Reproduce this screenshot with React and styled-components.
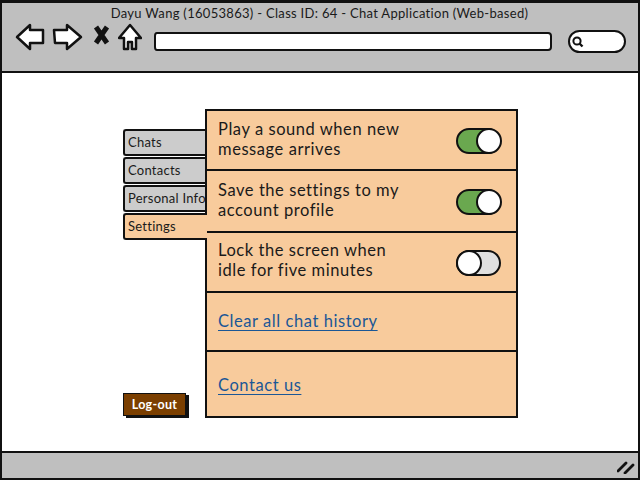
import React from "react";
import styled, { createGlobalStyle } from "styled-components";

const GlobalStyle = createGlobalStyle`
    html, body {
        margin : 0;
        padding : 0;
        background : #ffffff;
    }
    body {
        font-family : "Lato", "Noto Sans", sans-serif;
        color : #1a1a1a;
    }
`;

const Window = styled.div`
    width : 640px;
    height : 480px;
    box-sizing : border-box;
    border : 2px solid #111111;
    border-top-width : 3px;
    display : flex;
    flex-direction : column;
    overflow : hidden;
`;

const Header = styled.header`
    height : 70px;
    flex : none;
    box-sizing : border-box;
    background : #bfbfbf;
    border-bottom : 2px solid #111111;
    padding : 2px 12px 0 13px;
`;

const Title = styled.div`
    text-align : center;
    font-size : 13px;
    line-height : 17px;
    letter-spacing : 0.3px;
    padding-right : 2px;
`;

const Toolbar = styled.div`
    display : flex;
    align-items : flex-start;
    margin-top : 1px;
    height : 32px;
`;

const NavIcon = styled.svg`
    flex : none;
    display : block;
    margin-right : ${props => props.$gap}px;
`;

const AddressBar = styled.div`
    flex : none;
    width : 394px;
    height : 15px;
    margin-left : 12px;
    margin-top : 9px;
    background : #ffffff;
    border : 2px solid #111111;
    border-radius : 3px 4px 4px 3px / 4px;
`;

const SearchBox = styled.div`
    flex : none;
    width : 54px;
    height : 19px;
    margin-left : 16px;
    margin-top : 7px;
    background : #ffffff;
    border : 2px solid #111111;
    border-radius : 12px;
    display : flex;
    align-items : center;
`;

const Content = styled.main`
    flex : 1;
    display : flex;
    align-items : stretch;
    padding : 36px 0 33px 121px;
    min-height : 0;
`;

const Sidebar = styled.nav`
    width : 82px;
    flex : none;
    display : flex;
    flex-direction : column;
    padding-top : 20px;
    position : relative;
    z-index : 1;
`;

const Tab = styled.div`
    height : 27px;
    flex : none;
    box-sizing : border-box;
    margin-bottom : 1px;
    margin-right : ${props => (props.$active ? "-2px" : "0")};
    padding-left : 3px;
    font-size : 13px;
    line-height : 22px;
    letter-spacing : 0.25px;
    white-space : nowrap;
    overflow : hidden;
    background : ${props => (props.$active ? "#f8cb9c" : "#cccccc")};
    border : 2px solid #111111;
    border-right : none;
    border-radius : 3px 0 0 3px;
`;

const LogoutButton = styled.div`
    margin-top : auto;
    margin-bottom : 2px;
    width : 63px;
    height : 23px;
    box-sizing : border-box;
    background : #7b3f00;
    color : #ffffff;
    border : 1px solid #111111;
    box-shadow : 3px 2px 0 #111111;
    font-size : 12.5px;
    font-weight : 700;
    line-height : 21px;
    text-align : center;
    letter-spacing : 0.3px;
`;

const Panel = styled.section`
    width : 313px;
    flex : none;
    box-sizing : border-box;
    display : flex;
    flex-direction : column;
    background : #f8cb9c;
    border : 2px solid #111111;
`;

const Row = styled.div`
    height : ${props => props.$height}px;
    flex : none;
    box-sizing : border-box;
    display : flex;
    align-items : center;
    justify-content : space-between;
    padding : 0 15px 0 11px;
    border-bottom : ${props => (props.$last ? "none" : "2px solid #111111")};
`;

const RowText = styled.div`
    font-size : 16.5px;
    line-height : 20px;
    letter-spacing : 0.56px;
    white-space : pre-line;
    margin-bottom : ${props => props.$lift}px;
`;

const RowLink = styled.a`
    font-size : 16.5px;
    letter-spacing : 0.56px;
    color : #1b5796;
    text-decoration : underline;
    text-underline-offset : 3px;
    margin-bottom : ${props => props.$lift}px;
`;

const Switch = styled.div`
    width : 45px;
    height : 26px;
    flex : none;
    box-sizing : border-box;
    position : relative;
    margin-top : 2px;
    background : ${props => (props.$on ? "#6aa84f" : "#e0e0e0")};
    border : 2.5px solid #111111;
    border-radius : 13px;
`;

const Knob = styled.div`
    position : absolute;
    top : -2.5px;
    ${props => (props.$on ? "right : -2.5px;" : "left : -2.5px;")}
    width : 26px;
    height : 26px;
    box-sizing : border-box;
    background : #ffffff;
    border : 2.5px solid #111111;
    border-radius : 50%;
`;

const Footer = styled.footer`
    height : 27px;
    flex : none;
    box-sizing : border-box;
    background : #bfbfbf;
    border-top : 2px solid #111111;
    display : flex;
    align-items : center;
    justify-content : flex-end;
    padding : 2px 3px 0 0;
`;

const stroke = { stroke: "#111111", strokeWidth: 2.5, strokeLinejoin: "round", fill: "#ffffff" };

const BackIcon = () => (
    <NavIcon $gap={7} width="30" height="28" viewBox="0 0 30 28">
        <path d="M2 14 L15 2 L15 7 L28 7 L28 20 L15 20 L15 26 Z" {...stroke} />
    </NavIcon>
);

const ForwardIcon = () => (
    <NavIcon $gap={9} width="31" height="28" viewBox="0 0 31 28">
        <path d="M29 14 L15 2 L15 7 L2 7 L3 20 L15 20 L15 26 Z" {...stroke} />
    </NavIcon>
);

const StopIcon = () => (
    <NavIcon $gap={7} width="19" height="24" viewBox="0 0 19 24">
        <path d="M4 4 L15 20 M15 4 L4 20" stroke="#111111" strokeWidth="5" fill="none" />
    </NavIcon>
);

const HomeIcon = () => (
    <NavIcon $gap={0} width="24" height="28" viewBox="0 0 24 28">
        <path d="M12 2 L23 15 L18 15 L18 26 L14 26 L14 19 L10 19 L10 26 L6 26 L6 15 L1 15 Z" {...stroke} />
    </NavIcon>
);

const SearchIcon = () => (
    <svg width="14" height="14" viewBox="0 0 14 14" style={{ marginLeft: 1 }}>
        <circle cx="6" cy="6" r="3.6" fill="none" stroke="#111111" strokeWidth="2" />
        <path d="M8.5 8.5 L11.5 11.5" stroke="#111111" strokeWidth="2.4" />
    </svg>
);

const GripIcon = () => (
    <svg width="18" height="14" viewBox="0 0 18 14">
        <path d="M1 11 L9 3 M8 13 L16 5" stroke="#111111" strokeWidth="2.8" strokeLinecap="round" />
    </svg>
);

const tabs = ["Chats", "Contacts", "Personal Info", "Settings"];

const settings = [
    { text: "Play a sound when new\nmessage arrives", on: true, height: 60, lift: 2 },
    { text: "Save the settings to my\naccount profile", on: true, height: 62, lift: 2 },
    { text: "Lock the screen when\nidle for five minutes", on: false, height: 60, lift: 4 },
];

const App = () => {
    return (
        <Window>
            <GlobalStyle />
            <Header>
                <Title>Dayu Wang (16053863) - Class ID: 64 - Chat Application (Web-based)</Title>
                <Toolbar>
                    <BackIcon />
                    <ForwardIcon />
                    <StopIcon />
                    <HomeIcon />
                    <AddressBar />
                    <SearchBox>
                        <SearchIcon />
                    </SearchBox>
                </Toolbar>
            </Header>
            <Content>
                <Sidebar>
                    {tabs.map(tab => (
                        <Tab key={tab} $active={tab === "Settings"}>{tab}</Tab>
                    ))}
                    <LogoutButton>Log-out</LogoutButton>
                </Sidebar>
                <Panel>
                    {settings.map(item => (
                        <Row key={item.text} $height={item.height}>
                            <RowText $lift={item.lift}>{item.text}</RowText>
                            <Switch $on={item.on}>
                                <Knob $on={item.on} />
                            </Switch>
                        </Row>
                    ))}
                    <Row $height={59}>
                        <RowLink $lift={2}>Clear all chat history</RowLink>
                    </Row>
                    <Row $height={66} $last>
                        <RowLink $lift={0}>Contact us</RowLink>
                    </Row>
                </Panel>
            </Content>
            <Footer>
                <GripIcon />
            </Footer>
        </Window>
    );
};

export default App;
